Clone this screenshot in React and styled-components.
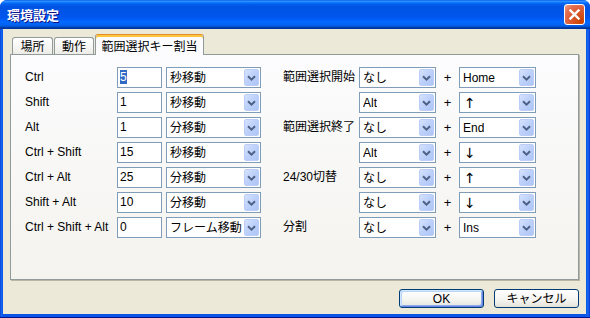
import React from "react";
import styled, { createGlobalStyle } from "styled-components";

const GlobalStyle = createGlobalStyle`
  html, body {
    margin: 0;
    padding: 0;
    background: #ffffff;
  }
  body {
    font-family: "Liberation Sans", "Noto Sans CJK JP", sans-serif;
    font-size: 12px;
    color: #000;
  }
`;

const FONT = `"Liberation Sans", "Noto Sans CJK JP", sans-serif`;

const Window = styled.div`
  width: 590px;
  height: 318px;
  box-sizing: border-box;
  display: flex;
  flex-direction: column;
  background: linear-gradient(to right, #0831d9 0, #166aee 1px, #0b55e6 3px, #0b55e6 586px, #166aee 588px, #0831d9 590px);
  border-radius: 7px 7px 0 0;
  overflow: hidden;
  box-shadow: inset 0 -1px 0 #00138c;
`;

const TitleBar = styled.div`
  height: 29px;
  flex-shrink: 0;
  display: flex;
  align-items: center;
  justify-content: space-between;
  padding: 0 5px 0 7px;
  background: linear-gradient(
    to bottom,
    #0058ee 0%,
    #3593ff 4%,
    #288eff 6%,
    #127dff 8%,
    #036ffc 10%,
    #0262ee 14%,
    #0057e5 20%,
    #0054e3 24%,
    #0055eb 56%,
    #005bf5 66%,
    #026afe 76%,
    #0062ef 86%,
    #0052d6 92%,
    #0040ab 94%,
    #003092 100%
  );
`;

const Title = styled.span`
  color: #fff;
  font-family: "Noto Sans CJK JP", sans-serif;
  font-weight: bold;
  font-size: 13px;
  line-height: 16px;
  text-shadow: 1px 1px 0 #0f1089;
`;

const CloseButton = styled.div`
  width: 21px;
  height: 21px;
  box-sizing: border-box;
  border: 1px solid #fff;
  border-radius: 3px;
  background: radial-gradient(circle at 85% 85%, #c94200 0%, #d9582e 45%, #e27052 75%, #f0a890 100%);
  display: flex;
  align-items: center;
  justify-content: center;
`;

const Body = styled.div`
  flex: 1;
  margin: 0 4px 4px 3px;
  background: #ece9d8;
  padding: 5px 7px 6px 7px;
  display: flex;
  flex-direction: column;
`;

const TabStrip = styled.div`
  display: flex;
  align-items: flex-end;
  height: 21px;
  padding-left: 2px;
  margin-bottom: -1px;
  position: relative;
  z-index: 1;
`;

const Tab = styled.div`
  box-sizing: border-box;
  width: ${(p) => p.$w}px;
  height: ${(p) => (p.$active ? 21 : 17)}px;
  margin-bottom: ${(p) => (p.$active ? 0 : 1)}px;
  margin-right: ${(p) => (p.$active ? 0 : 1)}px;
  border: 1px solid #919b9c;
  border-bottom: none;
  border-radius: 3px 3px 0 0;
  display: flex;
  align-items: center;
  justify-content: center;
  font-family: "Noto Sans CJK JP", sans-serif;
  font-size: 12px;
  line-height: 14px;
  padding-top: ${(p) => (p.$active ? 1 : 0)}px;
  background: ${(p) =>
    p.$active
      ? "#fcfcfe"
      : "linear-gradient(to bottom, #ffffff 0%, #f7f7f5 50%, #ecebe6 100%)"};
  ${(p) =>
    p.$active &&
    `
    border-top: 1px solid #e68b2c;
    box-shadow: inset 0 2px 0 #ffc73c;
  `}
`;

const Panel = styled.div`
  height: 226px;
  box-sizing: border-box;
  border: 1px solid #919b9c;
  background: linear-gradient(to bottom, #fcfcfe 0%, #f4f3ee 100%);
  box-shadow: 1px 1px 0 #b8b6a8;
  padding: 12px 14px;
  display: flex;
  gap: 22px;
`;

const LeftGrid = styled.div`
  display: grid;
  grid-template-columns: 88px 45px 95px;
  grid-auto-rows: 21px;
  column-gap: 4px;
  row-gap: 4px;
`;

const RightGrid = styled.div`
  display: grid;
  grid-template-columns: 76px 77px 23px 77px;
  grid-auto-rows: 21px;
  row-gap: 4px;
`;

const Label = styled.div`
  display: flex;
  align-items: center;
  white-space: nowrap;
  font-family: ${FONT};
  font-size: 12px;
  line-height: 14px;
  padding-bottom: 2px;
  grid-column: ${(p) => p.$col || "auto"};
`;

const Plus = styled.div`
  display: flex;
  align-items: center;
  justify-content: center;
  font-family: ${FONT};
  font-size: 13px;
`;

const TextBox = styled.div`
  box-sizing: border-box;
  height: 21px;
  border: 1px solid #7f9db9;
  background: #fff;
  padding: 1px 2px;
  font-family: ${FONT};
  font-size: 12px;
  line-height: 16px;
  white-space: nowrap;
  overflow: hidden;
`;

const Selected = styled.span`
  background: #316ac5;
  color: #fff;
`;

const Combo = styled.div`
  box-sizing: border-box;
  height: 21px;
  border: 1px solid #7f9db9;
  background: #fff;
  display: flex;
  align-items: center;
  justify-content: space-between;
  padding: 1px 1px 1px 3px;
  grid-column: ${(p) => p.$col || "auto"};
`;

const ComboText = styled.span`
  font-family: ${FONT};
  font-size: 12px;
  line-height: 14px;
  white-space: nowrap;
  overflow: hidden;
`;

const Arrow = styled.span`
  font-family: "DejaVu Sans", sans-serif;
  font-size: 14px;
  line-height: 14px;
  padding-left: 1px;
`;

const ComboButton = styled.div`
  width: 15px;
  height: 17px;
  flex-shrink: 0;
  box-sizing: border-box;
  border: 1px solid #bccef7;
  border-radius: 2px;
  background: linear-gradient(to bottom right, #d6e2fd 0%, #bcd0fa 50%, #aec5f5 100%);
  display: flex;
  align-items: center;
  justify-content: center;
`;

const Footer = styled.div`
  display: flex;
  justify-content: flex-end;
  gap: 10px;
  margin-top: 9px;
`;

const Button = styled.div`
  width: 85px;
  height: 19px;
  box-sizing: border-box;
  border: 1px solid #003c74;
  border-radius: 3px;
  background: linear-gradient(to bottom, #ffffff 0%, #f4f4f0 60%, #e3e2da 100%);
  display: flex;
  align-items: center;
  justify-content: center;
  font-family: ${FONT};
  font-size: 12px;
  line-height: 14px;
  ${(p) =>
    p.$default &&
    `
    box-shadow: inset 1px 1px 0 #cee7ff, inset -1px -1px 0 #6982ee, inset 2px 2px 0 #bcd4f6, inset -2px -2px 0 #89ade4;
  `}
`;

function Chevron() {
  return (
    <svg width="9" height="6" viewBox="0 0 9 6">
      <path d="M1 1.2 L4.5 4.6 L8 1.2" stroke="#4d6185" strokeWidth="2" fill="none" />
    </svg>
  );
}

function Select({ value, col }) {
  const isArrow = value === "↑" || value === "↓";
  return (
    <Combo $col={col}>
      {isArrow ? <Arrow>{value}</Arrow> : <ComboText>{value}</ComboText>}
      <ComboButton>
        <Chevron />
      </ComboButton>
    </Combo>
  );
}

const leftRows = [
  { label: "Ctrl", value: "5", unit: "秒移動", selected: true },
  { label: "Shift", value: "1", unit: "秒移動" },
  { label: " Alt", value: "1", unit: "分移動" },
  { label: "Ctrl + Shift", value: "15", unit: "秒移動" },
  { label: "Ctrl + Alt", value: "25", unit: "分移動" },
  { label: "Shift + Alt", value: "10", unit: "分移動" },
  { label: "Ctrl + Shift + Alt", value: "0", unit: "フレーム移動" },
];

const rightRows = [
  { label: "範囲選択開始", mod: "なし", key: "Home" },
  { label: "", mod: "Alt", key: "↑" },
  { label: "範囲選択終了", mod: "なし", key: "End" },
  { label: "", mod: "Alt", key: "↓" },
  { label: "24/30切替", mod: "なし", key: "↑" },
  { label: "", mod: "なし", key: "↓" },
  { label: "分割", mod: "なし", key: "Ins" },
];

export default function App() {
  return (
    <>
      <GlobalStyle />
      <Window>
        <TitleBar>
          <Title>環境設定</Title>
          <CloseButton>
            <svg width="11" height="11" viewBox="0 0 11 11">
              <path d="M1.5 1.5 L9.5 9.5 M9.5 1.5 L1.5 9.5" stroke="#fff" strokeWidth="2.4" strokeLinecap="square" />
            </svg>
          </CloseButton>
        </TitleBar>
        <Body>
          <TabStrip>
            <Tab $w={41}>場所</Tab>
            <Tab $w={40}>動作</Tab>
            <Tab $w={109} $active>
              範囲選択キー割当
            </Tab>
          </TabStrip>
          <Panel>
            <LeftGrid>
              {leftRows.map((r) => (
                <React.Fragment key={r.label}>
                  <Label>{r.label}</Label>
                  <TextBox>{r.selected ? <Selected>{r.value}</Selected> : r.value}</TextBox>
                  <Select value={r.unit} />
                </React.Fragment>
              ))}
            </LeftGrid>
            <RightGrid>
              {rightRows.map((r, i) => (
                <React.Fragment key={i}>
                  <Label $col="1">{r.label}</Label>
                  <Select value={r.mod} col="2" />
                  <Plus>+</Plus>
                  <Select value={r.key} col="4" />
                </React.Fragment>
              ))}
            </RightGrid>
          </Panel>
          <Footer>
            <Button $default>OK</Button>
            <Button>キャンセル</Button>
          </Footer>
        </Body>
      </Window>
    </>
  );
}
